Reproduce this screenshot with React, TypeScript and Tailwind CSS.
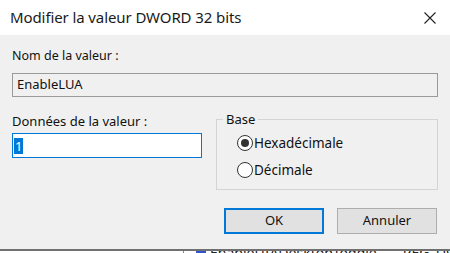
import React from 'react';

function Radio({ checked, label }: { checked?: boolean; label: string }) {
  return (
    <label className="flex items-center h-[16px]">
      <span className="w-[16px] h-[16px] rounded-full border border-[#333333] bg-white flex items-center justify-center">
        {checked && <span className="w-[8px] h-[8px] rounded-full bg-[#333333]" />}
      </span>
      <span className="ml-[1px] text-[13.5px] text-[#111]">{label}</span>
    </label>
  );
}

export default function App() {
  return (
    <div
      className="w-[450px] h-[253px] overflow-hidden flex flex-col bg-white"
      style={{ fontFamily: '"Noto Sans", "Open Sans", sans-serif' }}
    >
      {/* title bar */}
      <div className="h-[35px] shrink-0 bg-white flex items-center justify-between pl-[10px] pr-[14px]">
        <span className="text-[15px] text-[#1a1a1a] tracking-[-0.1px]">Modifier la valeur DWORD 32 bits</span>
        <svg width="12" height="12" viewBox="0 0 12 12" className="text-[#222]">
          <path d="M0.5 0.5 L11.5 11.5 M11.5 0.5 L0.5 11.5" stroke="currentColor" strokeWidth="1.1" fill="none" />
        </svg>
      </div>

      {/* body */}
      <div className="h-[214px] shrink-0 bg-[#f0f0f0] px-[12px] pt-[13px] text-[12.5px] text-[#111]">
        <div className="leading-[16px]">Nom de la valeur :</div>
        <div className="mt-[9px] h-[24px] border border-[#9a9a9a] bg-[#f0f0f0] flex items-center px-[4px] text-[13px]">
          EnableLUA
        </div>

        <div className="mt-[15px] flex items-start">
          <div className="w-[190px] pt-[1px]">
            <div className="leading-[16px] text-[13px]">Données de la valeur :</div>
            <div className="mt-[4px] h-[25px] border border-[#0078d7] bg-white flex items-center pl-[1px] text-[13px]">
              <span className="bg-[#0078d7] text-white px-[1px] leading-[16px]">1</span>
            </div>
          </div>

          <fieldset className="ml-[14px] w-[222px] h-[78px] border border-[#d4d4d4] pl-[20px]">
            <legend className="ml-[-14px] px-[3px] text-[13px] leading-[14px]">Base</legend>
            <div className="mt-[9px] flex flex-col gap-[11px]">
              <Radio checked label="Hexadécimale" />
              <Radio label="Décimale" />
            </div>
          </fieldset>
        </div>

        <div className="mt-[18px] flex justify-end gap-[13px] pr-[1px]">
          <button className="w-[100px] h-[26px] border-2 border-[#0078d7] bg-[#e1e1e1] text-[13px] text-[#111]">OK</button>
          <button className="w-[100px] h-[26px] border border-[#adadad] bg-[#e1e1e1] text-[13px] text-[#111]">Annuler</button>
        </div>
      </div>

      {/* background window peeking below */}
      <div className="h-[2px] shrink-0 bg-[#707070]" />
      <div className="flex-1 overflow-hidden bg-white flex items-start pl-[183px]">
        <div className="flex items-center gap-[4px] mt-[-5px] text-[14px] leading-[14px] text-[#222]">
          <span className="w-[1px] h-[10px] bg-[#888]" />
          <span className="w-[10px] h-[8px] bg-[#3355cc] ml-[8px]" />
          <span>EnableUIADesktopToggle</span>
          <span className="ml-[22px]">REG_DWORD</span>
        </div>
      </div>
    </div>
  );
}
